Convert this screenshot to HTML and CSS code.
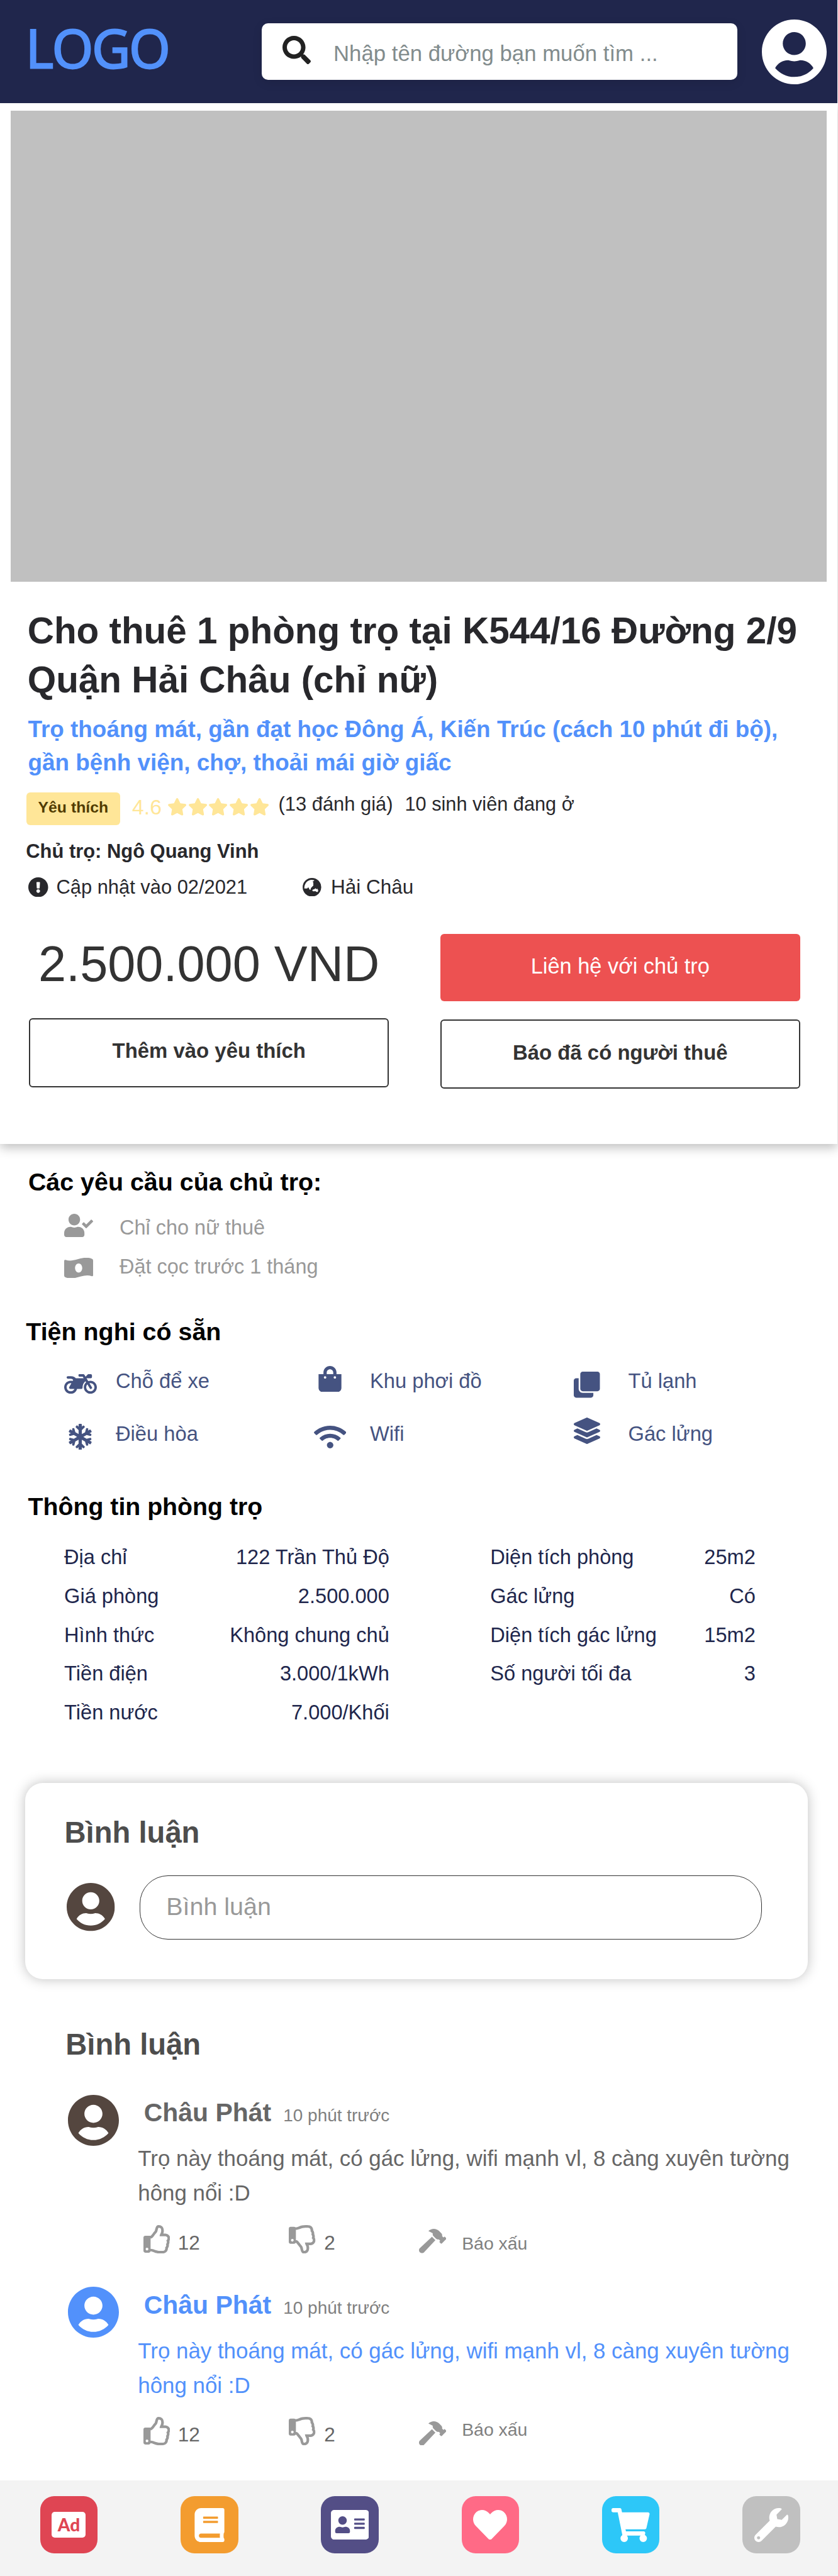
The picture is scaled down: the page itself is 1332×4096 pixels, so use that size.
FILE: index.html
```html
<!DOCTYPE html>
<html lang="vi">
<head>
<meta charset="utf-8">
<title>Cho thuê phòng trọ</title>
<link rel="stylesheet" href="styles.css">
</head>
<body>
<svg class="sprite" aria-hidden="true">
  <symbol id="user" viewBox="0 8 496 496"><path d="M248 8C111 8 0 119 0 256s111 248 248 248 248-111 248-248S385 8 248 8zm0 96c48.600 0 88 39.400 88 88s-39.400 88-88 88-88-39.400-88-88 39.400-88 88-88zm0 344c-58.700 0-111.300-26.600-146.500-68.200 18.800-35.400 55.600-59.800 98.500-59.800 2.400 0 4.800.4 7.100 1.100 13 4.200 26.600 6.900 40.900 6.900 14.300 0 28-2.700 40.900-6.900 2.300-.7 4.700-1.100 7.100-1.100 42.900 0 79.700 24.400 98.500 59.800C359.300 421.400 306.700 448 248 448z"/></symbol>
  <symbol id="star" viewBox="18 0 540 512"><path d="M259.300 17.800L194 150.200 47.900 171.500c-26.200 3.800-36.700 36.100-17.700 54.600l105.700 103-25 145.500c-4.500 26.300 23.200 46 46.400 33.700L288 439.600l130.700 68.700c23.200 12.200 50.900-7.400 46.400-33.700l-25-145.500 105.700-103c19-18.500 8.500-50.800-17.700-54.600L382 150.200 316.700 17.800c-11.700-23.600-45.600-23.900-57.400 0z"/></symbol>
  <symbol id="up" viewBox="0 0 480 512"><path d="M466.270 286.690C475.040 271.840 480 256 480 236.850c0-44.015-37.218-85.580-85.820-85.580H357.700c4.920-12.810 8.850-28.130 8.850-46.540C366.550 31.936 328.860 0 271.280 0c-61.607 0-58.093 94.933-71.760 108.600-22.747 22.747-49.615 66.447-68.760 83.400H32c-17.673 0-32 14.327-32 32v240c0 17.673 14.327 32 32 32h64c14.893 0 27.408-10.174 30.978-23.950 44.509 1.001 75.060 39.940 177.802 39.940 7.220 0 15.220.01 22.220.01 77.117 0 111.986-39.423 112.940-95.330 13.319-18.425 20.299-43.122 17.340-66.990 9.854-18.452 13.664-40.343 8.990-62.990zm-61.750 53.830c12.560 21.130 1.260 49.410-13.940 57.570 7.700 48.780-17.608 65.900-53.120 65.900h-37.820c-71.639 0-118.029-37.820-171.640-37.820V240h10.920c28.360 0 67.980-70.890 94.540-97.460 28.360-28.360 18.910-75.630 37.820-94.540 47.270 0 47.270 32.980 47.270 56.730 0 39.170-28.360 56.720-28.360 94.540h103.990c21.110 0 37.730 18.910 37.820 37.820.09 18.900-12.820 37.810-22.270 37.810 13.489 14.555 16.371 45.236-5.210 65.620zM88 432c0 13.255-10.745 24-24 24s-24-10.745-24-24 10.745-24 24-24 24 10.745 24 24z"/></symbol>
  <symbol id="down" viewBox="0 0 480 512"><path d="M466.270 225.310c4.674-22.647.864-44.538-8.990-62.990 2.958-23.868-4.021-48.565-17.340-66.990C438.986 39.423 404.117 0 327 0c-7 0-15 .01-22.220.01C201.195.01 168.997 40 128 40h-10.845c-5.640-4.975-13.042-8-21.155-8H32C14.327 32 0 46.327 0 64v240c0 17.673 14.327 32 32 32h64c11.842 0 22.175-6.438 27.708-16h7.052c19.146 16.953 46.013 60.653 68.760 83.400 13.667 13.667 10.153 108.600 71.760 108.600 57.580 0 95.270-31.936 95.270-104.730 0-18.410-3.930-33.730-8.850-46.540h36.480c48.602 0 85.820-41.565 85.820-85.580 0-19.150-4.960-34.990-13.730-49.840zM64 296c-13.255 0-24-10.745-24-24s10.745-24 24-24 24 10.745 24 24-10.745 24-24 24zm330.180 16.730H290.190c0 37.820 28.360 55.370 28.360 94.540 0 23.750 0 56.730-47.270 56.730-18.910-18.910-9.460-66.180-37.820-94.540C206.900 342.890 167.280 272 138.920 272H128V85.830c53.611 0 100.001-37.820 171.640-37.820h37.820c35.512 0 60.820 17.120 53.120 65.900 15.200 8.160 26.500 36.440 13.940 57.570 21.581 20.384 18.699 51.065 5.210 65.620 9.450 0 22.360 18.910 22.270 37.810-.09 18.910-16.710 37.820-37.820 37.820z"/></symbol>
  <symbol id="hammer" viewBox="0 0 576 512"><path d="M571.310 193.940l-22.630-22.630c-6.250-6.250-16.380-6.250-22.630 0l-11.310 11.310-28.900-28.900c5.630-21.310.36-44.900-16.350-61.610l-45.250-45.250c-62.480-62.480-163.790-62.480-226.280 0l90.510 45.250v18.750c0 16.970 6.740 33.250 18.750 45.250l49.140 49.140c16.710 16.710 40.300 21.980 61.610 16.350l28.900 28.900-11.310 11.310c-6.250 6.250-6.250 16.380 0 22.630l22.630 22.630c6.250 6.250 16.380 6.250 22.630 0l90.510-90.510c6.230-6.240 6.230-16.370-.02-22.620zm-286.720-15.200c-3.700-3.700-6.840-7.790-9.850-11.950L19.640 404.960c-25.570 23.880-26.260 64.190-1.530 88.930s65.050 24.050 88.920-1.530l238.130-255.070c-3.960-2.910-7.900-5.870-11.440-9.410l-49.140-49.140z"/></symbol>
</svg>

<header class="topbar">
  <div class="logo">LOGO</div>
  <div class="search">
    <svg class="search-icon" viewBox="0 0 512 512"><path d="M505 442.700L405.300 343c-4.500-4.500-10.600-7-17-7H372c27.600-35.300 44-79.700 44-128C416 93.100 322.900 0 208 0S0 93.100 0 208s93.100 208 208 208c48.300 0 92.700-16.400 128-44v16.300c0 6.400 2.500 12.500 7 17l99.700 99.700c9.400 9.400 24.600 9.400 33.900 0l28.300-28.300c9.400-9.400 9.400-24.600.1-34zM208 336c-70.700 0-128-57.200-128-128 0-70.700 57.200-128 128-128 70.700 0 128 57.200 128 128 0 70.700-57.200 128-128 128z"/></svg>
    <span class="search-text">Nhập tên đường bạn muốn tìm ...</span>
  </div>
  <svg class="me"><use href="#user"/></svg>
</header>

<section class="listing">
  <div class="hero"></div>
  <h1>Cho thuê 1 phòng trọ tại K544/16 Đường 2/9<br>Quận Hải Châu (chỉ nữ)</h1>
  <p class="lead">Trọ thoáng mát, gần đạt học Đông Á, Kiến Trúc (cách 10 phút đi bộ),<br>gần bệnh viện, chợ, thoải mái giờ giấc</p>
  <div class="rating">
    <span class="badge">Yêu thích</span>
    <span class="score">4.6</span>
    <span class="stars"><svg><use href="#star"/></svg><svg><use href="#star"/></svg><svg><use href="#star"/></svg><svg><use href="#star"/></svg><svg><use href="#star"/></svg></span>
    <span class="reviews">(13 đánh giá)</span>
    <span class="tenants">10 sinh viên đang ở</span>
  </div>
  <p class="owner">Chủ trọ: Ngô Quang Vinh</p>
  <div class="facts">
    <svg class="info" viewBox="8 8 496 496"><path d="M504 256c0 136.997-111.043 248-248 248S8 392.997 8 256C8 119.083 119.043 8 256 8s248 111.083 248 248zm-248 50c-25.405 0-46 20.595-46 46s20.595 46 46 46 46-20.595 46-46-20.595-46-46-46zm-43.673-165.346l7.418 136c.347 6.364 5.609 11.346 11.982 11.346h48.546c6.373 0 11.635-4.982 11.982-11.346l7.418-136c.375-6.874-5.098-12.654-11.982-12.654h-63.383c-6.884 0-12.356 5.780-11.981 12.654z"/></svg>
    <span class="updated">Cập nhật vào 02/2021</span>
    <svg class="globe" viewBox="138 107 162 161"><circle cx="219" cy="187.500" r="80.500"/><path fill="#fff" d="M153 198C151 160 175 124 218 123L240 127 236 133 226 138 224 142 231 144V174L223 180 217 188 210 194 208 206Q203 212 197 207L190 190H184L178 198ZM222 212L230 206 240 205 244 200 252 197 255 204H261L264 197 267 204 273 212 271 226 264 230 255 226 250 221 230 223 224 219Z"/></svg>
    <span class="area">Hải Châu</span>
  </div>
  <div class="actions">
    <div class="col">
      <div class="price">2.500.000 VND</div>
      <a class="btn">Thêm vào yêu thích</a>
    </div>
    <div class="col">
      <a class="btn primary">Liên hệ với chủ trọ</a>
      <a class="btn taken">Báo đã có người thuê</a>
    </div>
  </div>
</section>

<section class="rules">
  <h2>Các yêu cầu của chủ trọ:</h2>
  <ul>
    <li><svg class="i-check" viewBox="0 0 640 512"><path d="M224 256c70.700 0 128-57.300 128-128S294.700 0 224 0 96 57.300 96 128s57.300 128 128 128zm89.600 32h-16.700c-22.200 10.200-46.900 16-72.900 16s-50.600-5.800-72.900-16h-16.700C60.200 288 0 348.200 0 422.400V464c0 26.500 21.500 48 48 48h352c26.500 0 48-21.500 48-48v-41.600c0-74.200-60.200-134.400-134.400-134.400zm323-128.400l-27.800-28.100c-4.600-4.700-12.100-4.700-16.800-.1l-104.800 104-45.500-45.800c-4.600-4.700-12.100-4.700-16.800-.1l-28.100 27.900c-4.700 4.600-4.700 12.100-.1 16.800l81.700 82.300c4.600 4.700 12.100 4.700 16.800.1l141.300-140.200c4.600-4.700 4.700-12.200.1-16.800z"/></svg>Chỉ cho nữ thuê</li>
    <li><svg class="i-money" viewBox="0 0 46 32"><path fill-rule="evenodd" d="M0 4.500Q0 2.600 2 3C17 8 29-5 44 1.200Q46 2 46 4V27.500Q46 29.400 44 29C29 24 17 37 2 30.800Q0 30 0 28ZM23 8.800C19.700 8.800 17.300 12 17.300 16S19.700 23.200 23 23.200 28.700 20 28.700 16 26.300 8.800 23 8.800Z"/></svg>Đặt cọc trước 1 tháng</li>
  </ul>
</section>

<section class="amenities">
  <h2>Tiện nghi có sẵn</h2>
  <ul>
    <li><span class="cell"><svg class="i-moto" viewBox="0 64 640 384"><path d="M512.900 192c-14.900-.1-29.100 2.300-42.400 6.900L437.600 144H520c13.300 0 24-10.700 24-24V88c0-13.300-10.700-24-24-24h-45.300c-6.800 0-13.300 2.900-17.800 7.900l-37.500 41.700-22.800-38C392.200 68.400 384.400 64 376 64h-80c-8.800 0-16 7.200-16 16v16c0 8.800 7.200 16 16 16h66.400l19.200 32H227.900c-17.700-23.100-44.900-40-99.900-40H72.500C59 104 47.700 115 48 128.500c.2 13 10.900 23.500 24 23.500h56c24.500 0 38.700 10.900 47.800 24.800l-11.300 20.500c-13-3.900-26.900-5.700-41.300-5.200C55.900 194.500 1.600 249.600 0 317c-1.600 72.100 56.300 131 128 131 59.600 0 109.700-40.800 124-96h84.200c13.700 0 24.600-11.400 24-25.100-2.100-47.100 17.500-93.700 56.200-125l12.500 20.800c-27.600 23.700-45.100 58.900-44.800 98.200.5 69.600 57.200 126.500 126.800 127.100 71.600.7 129.800-57.500 129.200-129.100-.7-69.600-57.600-126.400-127.200-126.900zM128 400c-44.100 0-80-35.900-80-80s35.900-80 80-80c4.200 0 8.400.3 12.500 1L99 316.400c-8.800 16 2.800 35.600 21 35.600h81.300c-12.400 28.200-40.600 48-73.300 48zm463.900-75.600c-2.200 40.600-35 73.400-75.500 75.500-46.100 2.500-84.400-34.300-84.400-79.900 0-21.400 8.400-40.800 22.100-55.100l49.400 82.400c4.500 7.600 14.400 10 22 5.500l13.700-8.200c7.600-4.500 10-14.400 5.500-22l-48.600-80.900c5.200-1.100 10.500-1.600 15.900-1.600 45.600-.1 82.300 38.200 79.900 84.300z"/></svg></span>Chỗ để xe</li>
    <li><span class="cell"><svg class="i-bag" viewBox="0 0 448 512"><path d="M352 160v-32C352 57.420 294.579 0 224 0 153.420 0 96 57.420 96 128v32H0v272c0 44.183 35.817 80 80 80h288c44.183 0 80-35.817 80-80V160h-96zm-192-32c0-35.290 28.710-64 64-64s64 28.710 64 64v32H160v-32zm160 120c-13.255 0-24-10.745-24-24s10.745-24 24-24 24 10.745 24 24-10.745 24-24 24zm-192 0c-13.255 0-24-10.745-24-24s10.745-24 24-24 24 10.745 24 24-10.745 24-24 24z"/></svg></span>Khu phơi đồ</li>
    <li><span class="cell"><svg class="i-clone" viewBox="0 0 512 512"><path d="M464 0c26.510 0 48 21.490 48 48v288c0 26.510-21.490 48-48 48H176c-26.510 0-48-21.490-48-48V48c0-26.510 21.490-48 48-48h288M176 416c-44.112 0-80-35.888-80-80V128H48c-26.510 0-48 21.490-48 48v288c0 26.510 21.490 48 48 48h288c26.510 0 48-21.490 48-48v-48H176z"/></svg></span>Tủ lạnh</li>
    <li><span class="cell"><svg class="i-snow" viewBox="0 0 448 512"><path d="M440.300 345.200l-33.800-19.500 26-7c8.200-2.200 13.100-10.700 10.900-18.900l-4-14.900c-2.200-8.200-10.700-13.100-18.900-10.900l-70.800 19-63.900-37 63.800-36.900 70.800 19c8.200 2.200 16.700-2.700 18.900-10.900l4-14.900c2.200-8.200-2.700-16.700-10.900-18.900l-26-7 33.800-19.500c7.400-4.300 9.900-13.700 5.700-21.100L430.400 119c-4.300-7.400-13.700-9.900-21.100-5.700l-33.800 19.500 7-26c2.200-8.200-2.700-16.700-10.900-18.900l-14.900-4c-8.200-2.200-16.700 2.700-18.900 10.900l-19 70.800-62.800 36.200v-77.500l53.700-53.100c6.200-6.200 6.200-16.400 0-22.600l-11.300-11.300c-6.200-6.200-16.400-6.200-22.600 0L256 56.400V16c0-8.800-7.200-16-16-16h-32c-8.800 0-16 7.200-16 16v40.400l-19.700-19.700c-6.200-6.200-16.400-6.200-22.600 0L138.300 48c-6.300 6.200-6.300 16.400 0 22.600l53.700 53.100v77.500l-62.800-36.200-19-70.800c-2.200-8.200-10.700-13.100-18.900-10.900l-14.900 4c-8.200 2.200-13.100 10.700-10.900 18.900l7 26-33.800-19.500c-7.400-4.300-16.800-1.700-21.100 5.700L2.100 145.700c-4.300 7.400-1.700 16.800 5.700 21.100l33.800 19.500-26 7c-8.300 2.200-13.200 10.700-11 19l4 14.900c2.200 8.200 10.700 13.100 18.900 10.900l70.800-19 63.800 36.900-63.800 36.900-70.800-19c-8.200-2.200-16.700 2.700-18.900 10.900l-4 14.900c-2.200 8.200 2.700 16.700 10.900 18.900l26 7-33.800 19.600c-7.400 4.300-9.900 13.700-5.700 21.100l15.500 26.800c4.300 7.400 13.700 9.900 21.100 5.700l33.800-19.500-7 26c-2.200 8.200 2.700 16.700 10.900 18.900l14.900 4c8.200 2.200 16.700-2.700 18.900-10.900l19-70.800 62.800-36.200v77.500l-53.700 53.100c-6.300 6.200-6.300 16.400 0 22.600l11.300 11.300c6.200 6.200 16.400 6.200 22.600 0l19.700-19.700V496c0 8.800 7.200 16 16 16h32c8.800 0 16-7.200 16-16v-40.400l19.700 19.700c6.200 6.200 16.400 6.200 22.600 0l11.300-11.300c6.200-6.200 6.200-16.400 0-22.600L256 388.300v-77.500l62.800 36.200 19 70.800c2.200 8.200 10.700 13.100 18.900 10.900l14.900-4c8.200-2.200 13.100-10.700 10.900-18.900l-7-26 33.800 19.500c7.400 4.300 16.800 1.700 21.100-5.700l15.500-26.800c4.300-7.300 1.800-16.700-5.600-21z"/></svg></span>Điều hòa</li>
    <li><span class="cell"><svg class="i-wifi" viewBox="0 32 640 448"><path d="M634.910 154.880C457.740-8.990 182.190-8.930 5.090 154.880c-6.660 6.160-6.790 16.590-.35 22.980l34.240 33.970c6.140 6.100 16.020 6.230 22.400.38 145.920-133.680 371.300-133.710 517.250 0 6.380 5.850 16.260 5.710 22.400-.38l34.240-33.970c6.430-6.390 6.300-16.820-.36-22.980zM320 352c-35.350 0-64 28.650-64 64s28.650 64 64 64 64-28.650 64-64-28.650-64-64-64zm202.670-83.590c-115.260-101.930-290.210-101.820-405.340 0-6.900 6.100-7.120 16.690-.57 23.150l34.440 33.990c6 5.920 15.660 6.320 22.050.8 83.950-72.570 209.740-72.410 293.490 0 6.390 5.520 16.050 5.130 22.050-.8l34.440-33.990c6.560-6.460 6.330-17.060-.56-23.150z"/></svg></span>Wifi</li>
    <li><span class="cell"><svg class="i-layers" viewBox="0 0 512 512"><path d="M12.410 148.020l232.940 105.670c6.800 3.090 14.490 3.090 21.290 0l232.940-105.670c16.550-7.510 16.550-32.520 0-40.030L266.650 2.310a25.607 25.607 0 0 0-21.290 0L12.410 107.980c-16.550 7.510-16.550 32.530 0 40.040zm487.180 88.280l-58.090-26.330-161.640 73.270c-7.560 3.430-15.590 5.170-23.860 5.170s-16.290-1.740-23.860-5.170L70.510 209.970l-58.100 26.330c-16.550 7.500-16.550 32.500 0 40l232.940 105.590c6.800 3.080 14.490 3.080 21.290 0L499.590 276.300c16.550-7.500 16.550-32.500 0-40zm0 127.800l-57.870-26.230-161.860 73.370c-7.560 3.430-15.590 5.170-23.860 5.170s-16.290-1.740-23.860-5.170L70.290 337.870 12.410 364.100c-16.550 7.500-16.550 32.500 0 40l232.940 105.590c6.800 3.080 14.490 3.080 21.290 0L499.590 404.100c16.550-7.500 16.550-32.500 0-40z"/></svg></span>Gác lửng</li>
  </ul>
</section>

<section class="details">
  <h2>Thông tin phòng trọ</h2>
  <div class="tables">
    <dl>
      <div><dt>Địa chỉ</dt><dd>122 Trần Thủ Độ</dd></div>
      <div><dt>Giá phòng</dt><dd>2.500.000</dd></div>
      <div><dt>Hình thức</dt><dd>Không chung chủ</dd></div>
      <div><dt>Tiền điện</dt><dd>3.000/1kWh</dd></div>
      <div><dt>Tiền nước</dt><dd>7.000/Khối</dd></div>
    </dl>
    <dl>
      <div><dt>Diện tích phòng</dt><dd>25m2</dd></div>
      <div><dt>Gác lửng</dt><dd>Có</dd></div>
      <div><dt>Diện tích gác lửng</dt><dd>15m2</dd></div>
      <div><dt>Số người tối đa</dt><dd>3</dd></div>
    </dl>
  </div>
</section>

<section class="write">
  <h3>Bình luận</h3>
  <div class="write-row">
    <svg class="writer"><use href="#user"/></svg>
    <div class="field">Bình luận</div>
  </div>
</section>

<section class="comments">
  <h3>Bình luận</h3>
  <article class="comment">
    <svg class="avatar"><use href="#user"/></svg>
    <div class="content">
      <div class="byline"><b>Châu Phát</b><time>10 phút trước</time></div>
      <p>Trọ này thoáng mát, có gác lửng, wifi mạnh vl, 8 càng xuyên tường<br>hông nổi :D</p>
      <div class="votes">
        <svg class="thumb"><use href="#up"/></svg><span class="ups">12</span>
        <svg class="thumb"><use href="#down"/></svg><span class="downs">2</span>
        <svg class="hammer"><use href="#hammer"/></svg><span class="report">Báo xấu</span>
      </div>
    </div>
  </article>
  <article class="comment own">
    <svg class="avatar"><use href="#user"/></svg>
    <div class="content">
      <div class="byline"><b>Châu Phát</b><time>10 phút trước</time></div>
      <p>Trọ này thoáng mát, có gác lửng, wifi mạnh vl, 8 càng xuyên tường<br>hông nổi :D</p>
      <div class="votes">
        <svg class="thumb"><use href="#up"/></svg><span class="ups">12</span>
        <svg class="thumb"><use href="#down"/></svg><span class="downs">2</span>
        <svg class="hammer"><use href="#hammer"/></svg><span class="report">Báo xấu</span>
      </div>
    </div>
  </article>
</section>

<nav class="tabs">
  <a class="tab ad"><span>Ad</span></a>
  <a class="tab book"><svg width="48" height="54" viewBox="0 0 448 512"><path d="M448 360V24c0-13.300-10.700-24-24-24H96C43 0 0 43 0 96v320c0 53 43 96 96 96h328c13.300 0 24-10.700 24-24v-16c0-7.500-3.500-14.300-8.900-18.700-4.200-15.400-4.200-59.300 0-74.700 5.400-4.300 8.900-11.100 8.900-18.600zM128 134c0-3.300 2.700-6 6-6h212c3.300 0 6 2.700 6 6v20c0 3.300-2.700 6-6 6H134c-3.300 0-6-2.700-6-6v-20zm0 64c0-3.300 2.700-6 6-6h212c3.300 0 6 2.700 6 6v20c0 3.300-2.700 6-6 6H134c-3.300 0-6-2.700-6-6v-20zm253.400 250H96c-17.700 0-32-14.300-32-32 0-17.600 14.400-32 32-32h285.400c-1.900 17.100-1.900 46.900 0 64z"/></svg></a>
  <a class="tab card"><svg width="60.500" height="47" viewBox="0 32 576 448"><path d="M528 32H48C21.500 32 0 53.500 0 80v352c0 26.500 21.500 48 48 48h480c26.500 0 48-21.500 48-48V80c0-26.500-21.500-48-48-48zm-352 96c35.300 0 64 28.700 64 64s-28.700 64-64 64-64-28.700-64-64 28.700-64 64-64zm112 236.800c0 10.600-10 19.200-22.400 19.200H86.400C74 384 64 375.400 64 364.800v-19.200c0-31.800 30.100-57.600 67.200-57.600h5c12.300 5.100 25.700 8 39.800 8s27.600-2.900 39.800-8h5c37.100 0 67.200 25.800 67.200 57.600v19.200zM512 312c0 4.400-3.600 8-8 8H360c-4.400 0-8-3.600-8-8v-16c0-4.400 3.600-8 8-8h144c4.400 0 8 3.600 8 8v16zm0-64c0 4.400-3.600 8-8 8H360c-4.400 0-8-3.600-8-8v-16c0-4.400 3.600-8 8-8h144c4.400 0 8 3.600 8 8v16zm0-64c0 4.400-3.600 8-8 8H360c-4.400 0-8-3.600-8-8v-16c0-4.400 3.600-8 8-8h144c4.400 0 8 3.600 8 8v16z"/></svg></a>
  <a class="tab like"><svg width="54" height="47.500" viewBox="0 31 512 450"><path d="M462.300 62.600C407.500 15.900 326 24.300 275.700 76.200L256 96.500l-19.700-20.300C186.100 24.300 104.500 15.900 49.700 62.600c-62.800 53.600-66.100 149.800-9.900 207.900l193.500 199.800c12.500 12.900 32.800 12.900 45.300 0l193.500-199.800c56.300-58.100 53-154.300-9.800-207.900z"/></svg></a>
  <a class="tab cart"><svg width="60.500" height="54" viewBox="0 0 576 512"><path d="M528.120 301.319l47.273-208C578.806 78.301 567.391 64 551.990 64H159.208l-9.166-44.810C147.758 8.021 137.930 0 126.529 0H24C10.745 0 0 10.745 0 24v16c0 13.255 10.745 24 24 24h69.883l70.248 343.435C147.325 417.100 136 435.222 136 456c0 30.928 25.072 56 56 56s56-25.072 56-56c0-15.674-6.447-29.835-16.824-40h209.647C430.447 426.165 424 440.326 424 456c0 30.928 25.072 56 56 56s56-25.072 56-56c0-22.172-12.888-41.332-31.579-50.405l5.517-24.276c3.413-15.018-8.002-29.319-23.403-29.319H218.117l-6.545-32h293.145c11.206 0 20.920-7.754 23.403-18.681z"/></svg></a>
  <a class="tab tools"><svg width="54" height="54" viewBox="0 0 512 512"><path d="M507.730 109.100c-2.240-9.030-13.540-12.090-20.120-5.510l-74.360 74.360-67.880-11.310-11.310-67.880 74.360-74.360c6.620-6.620 3.430-17.900-5.660-20.160-47.380-11.740-99.550.91-136.580 37.930-39.640 39.640-50.550 97.100-34.050 147.200L18.740 402.760c-24.990 24.990-24.990 65.510 0 90.500 24.990 24.990 65.510 24.990 90.500 0l213.210-213.210c50.120 16.710 107.470 5.680 147.370-34.220 37.070-37.070 49.700-89.320 37.910-136.730zM64 472c-13.250 0-24-10.750-24-24 0-13.260 10.750-24 24-24s24 10.740 24 24c0 13.250-10.750 24-24 24z"/></svg></a>
</nav>
</body>
</html>
```
FILE: styles.css
```css
* { box-sizing: border-box; margin: 0; padding: 0; }
body {
  width: 1332px;
  height: 4096px;
  background: #fff;
  font-family: "Liberation Sans", Arial, sans-serif;
  display: flex;
  flex-direction: column;
  white-space: nowrap;
  overflow: hidden;
}
svg { display: block; flex: none; fill: currentColor; }
ul { list-style: none; }
.sprite { position: absolute; width: 0; height: 0; }

/* Top bar */
.topbar {
  width: 1331px;
  height: 164px;
  padding-left: 41px;
  background: #20264c;
  display: flex;
  align-items: center;
}
.logo {
  width: 375px;
  padding-bottom: 12.500px;
  font: 400 84px/100px "Open Sans", sans-serif;
  letter-spacing: -2px;
  -webkit-text-stroke: 2.800px #5291fb;
  color: #5291fb;
}
.search {
  width: 756px;
  height: 90.500px;
  border-radius: 10px;
  background: #fff;
  box-shadow: 0 4px 16px rgba(0, 0, 0, .1);
  display: flex;
}
.search-icon { width: 45px; height: 45px; margin: 20px 0 0 32.500px; color: #222; }
.search-text { margin-left: 36.500px; font-size: 34.780px; line-height: 96px; color: #828c8d; }
.me { width: 103px; height: 103px; margin-left: 38.500px; color: #fff; }

/* Listing */
.listing {
  width: 1331px;
  height: 1655px;
  padding-top: 11.500px;
  background: #fff;
  box-shadow: 0 6px 16px rgba(0, 0, 0, .25);
  clip-path: inset(0 -1px -40px 0);
  color: #28282c;
}
.hero { height: 749px; margin: 0 17px; background: #c0c0c0; }
h1 { margin: 39.500px 0 0 43.700px; font-size: 58.430px; line-height: 78.100px; }
.lead { margin: 14px 0 0 44.500px; font-size: 36.870px; line-height: 52.600px; font-weight: bold; color: #5291fb; }
.rating { display: flex; height: 51.300px; margin: 21px 0 0 41.600px; }
.badge {
  width: 149.500px;
  border-radius: 6px;
  background: #ffe698;
  color: #513c00;
  font-size: 24.800px;
  font-weight: bold;
  line-height: 48.800px;
  text-align: center;
}
.score { width: 57px; margin-left: 19px; font-size: 33.700px; line-height: 46.600px; color: #ffe698; }
.stars { display: flex; gap: 3.500px; padding-top: 9px; color: #ffe698; }
.stars svg { width: 29.200px; height: 27.700px; }
.reviews { width: 201px; margin-left: 15.500px; font-size: 30.900px; line-height: 38px; }
.tenants { font-size: 30.700px; line-height: 38px; }
.owner { margin: 21.900px 0 0 41.300px; font-size: 30.900px; line-height: 40px; font-weight: bold; }
.facts { display: flex; align-items: center; height: 40px; margin: 17px 0 0 45px; }
.info { width: 31.500px; height: 31.500px; }
.updated { width: 391.500px; margin-left: 13px; font-size: 30.860px; line-height: 41px; }
.globe { width: 29.700px; height: 29.500px; }
.area { margin-left: 15.300px; font-size: 31.500px; line-height: 41px; }
.actions { display: flex; justify-content: space-between; margin: 54.400px 59px 0 46px; }
.col { width: 572.400px; }
.price { height: 133.700px; padding-left: 15px; font-size: 79.310px; line-height: 95px; color: #333; }
.btn {
  display: block;
  height: 110px;
  border: 2px solid #333;
  border-radius: 6px;
  text-align: center;
  font-size: 32.920px;
  font-weight: bold;
  line-height: 99.800px;
  color: #333;
}
.btn.primary { height: 107.500px; margin-bottom: 28.200px; border: 0; background: #ed5151; color: #fff; font-size: 34.370px; font-weight: normal; line-height: 102px; }
.btn.taken { line-height: 101px; }

/* Requirements */
h2 { font-size: 39.400px; line-height: 50px; color: #000; }
.rules { padding: 35px 0 0 44.900px; }
.rules ul { margin-top: 23.400px; padding-left: 57.100px; color: #999; font-size: 32.470px; line-height: 50px; }
.rules li { display: flex; align-items: flex-start; gap: 42px; height: 61.200px; }
.i-check { width: 46px; height: 37px; margin-top: 2.600px; }
.i-money { width: 46px; height: 32.500px; margin-top: 11.400px; }

/* Amenities */
.amenities { padding: 42.500px 0 0 41.300px; }
.amenities ul {
  display: grid;
  grid-template-columns: 396.500px 408.500px 300px;
  row-gap: 34.200px;
  margin: 28.300px 0 0 60.700px;
  color: #455381;
  font-size: 32.700px;
  line-height: 50px;
}
.amenities li { display: flex; align-items: center; height: 50px; gap: 30px; }
.amenities li:nth-child(3n + 2) { gap: 37.500px; }
.amenities li:nth-child(3n) { gap: 39.500px; }
.cell { display: flex; justify-content: center; width: 52px; }
.i-moto { width: 52px; height: 31.200px; margin-top: 10px; }
.i-bag { width: 37px; height: 41.500px; margin-bottom: 6px; }
.i-clone { width: 41.500px; height: 41.500px; margin-top: 13px; }
.i-snow { width: 37px; height: 41.500px; margin-top: 9px; }
.i-wifi { width: 51.500px; height: 36px; margin-top: 11px; }
.i-layers { width: 42px; height: 42px; margin-bottom: 9px; }

/* Room details */
.details { padding: 65.300px 0 0 44.600px; }
.details h2 { font-size: 39.240px; }
.tables { display: flex; margin-top: 25.400px; padding-left: 57.500px; font-size: 32.600px; line-height: 61.650px; color: #20264c; }
dl { width: 516.700px; }
dl + dl { width: 421.500px; margin-left: 160.500px; }
dl div { display: flex; justify-content: space-between; height: 61.650px; }

/* Comment form */
h3 { font-size: 47.200px; line-height: 60px; color: #4d4d4d; }
.write {
  width: 1243.600px;
  height: 312px;
  margin: 81.600px 0 0 40px;
  padding: 48.500px 0 0 62.500px;
  border-radius: 28px;
  background: #fff;
  box-shadow: 0 0 20px rgba(0, 0, 0, .25);
}
.write-row { display: flex; align-items: center; margin: 38px 0 0 3.500px; }
.writer { width: 76.500px; height: 76.500px; color: #54463f; }
.field {
  width: 989.700px;
  height: 102px;
  margin-left: 39.200px;
  padding-left: 41.500px;
  border: 1.300px solid #333;
  border-radius: 45px;
  font-size: 39.470px;
  line-height: 97px;
  color: #999;
}

/* Comments */
.comments { padding: 73.800px 0 0 104.200px; }
.comment { display: flex; height: 305.300px; color: #666; }
h3 + .comment { margin-top: 49.800px; }
.avatar { width: 81px; height: 81px; margin-left: 3.800px; color: #54463f; }
.content { margin-left: 30.300px; padding-top: 3.500px; }
.byline { display: flex; align-items: baseline; height: 50px; margin-left: 9.500px; line-height: 50px; }
.byline b { width: 221.500px; font-size: 40.940px; }
.byline time { font-size: 27.930px; color: #808080; }
.content p { margin-top: 20px; font-size: 34.880px; line-height: 55px; }
.votes { display: flex; height: 60px; margin: 20.600px 0 0 8.400px; font-size: 31.500px; line-height: 62px; }
.thumb { width: 42.500px; height: 45.300px; margin-top: 3px; color: #999; }
.ups { width: 176.500px; margin-left: 12.500px; }
.downs { width: 150.500px; margin-left: 13.500px; }
.hammer { width: 43.500px; height: 38.700px; margin-top: 9.500px; color: #999; }
.report { margin-left: 25px; font-size: 28.400px; line-height: 64px; color: #808080; }
.own .avatar, .own b, .own p { color: #5291fb; }
.own .report { line-height: 46px; }

/* Bottom navigation */
.tabs {
  display: flex;
  justify-content: space-between;
  width: 1332px;
  height: 152.500px;
  margin-top: auto;
  padding: 25.400px 60.300px 0 63.700px;
  background: #f3f3f3;
}
.tab {
  display: flex;
  align-items: center;
  justify-content: center;
  width: 91.600px;
  height: 91.600px;
  border-radius: 22px;
  color: #fff;
}
.ad { background: #df4553; }
.ad span {
  width: 54px;
  height: 41px;
  border-radius: 5px;
  background: #fff;
  color: #df4553;
  font: 900 28px/40px Lato, sans-serif;
  text-align: center;
}
.book { background: #f39c2f; }
.card { background: #534e86; }
.like { background: #ff6a86; }
.cart { background: #2dc7f8; }
.tools { background: #c0c0c0; }
```
